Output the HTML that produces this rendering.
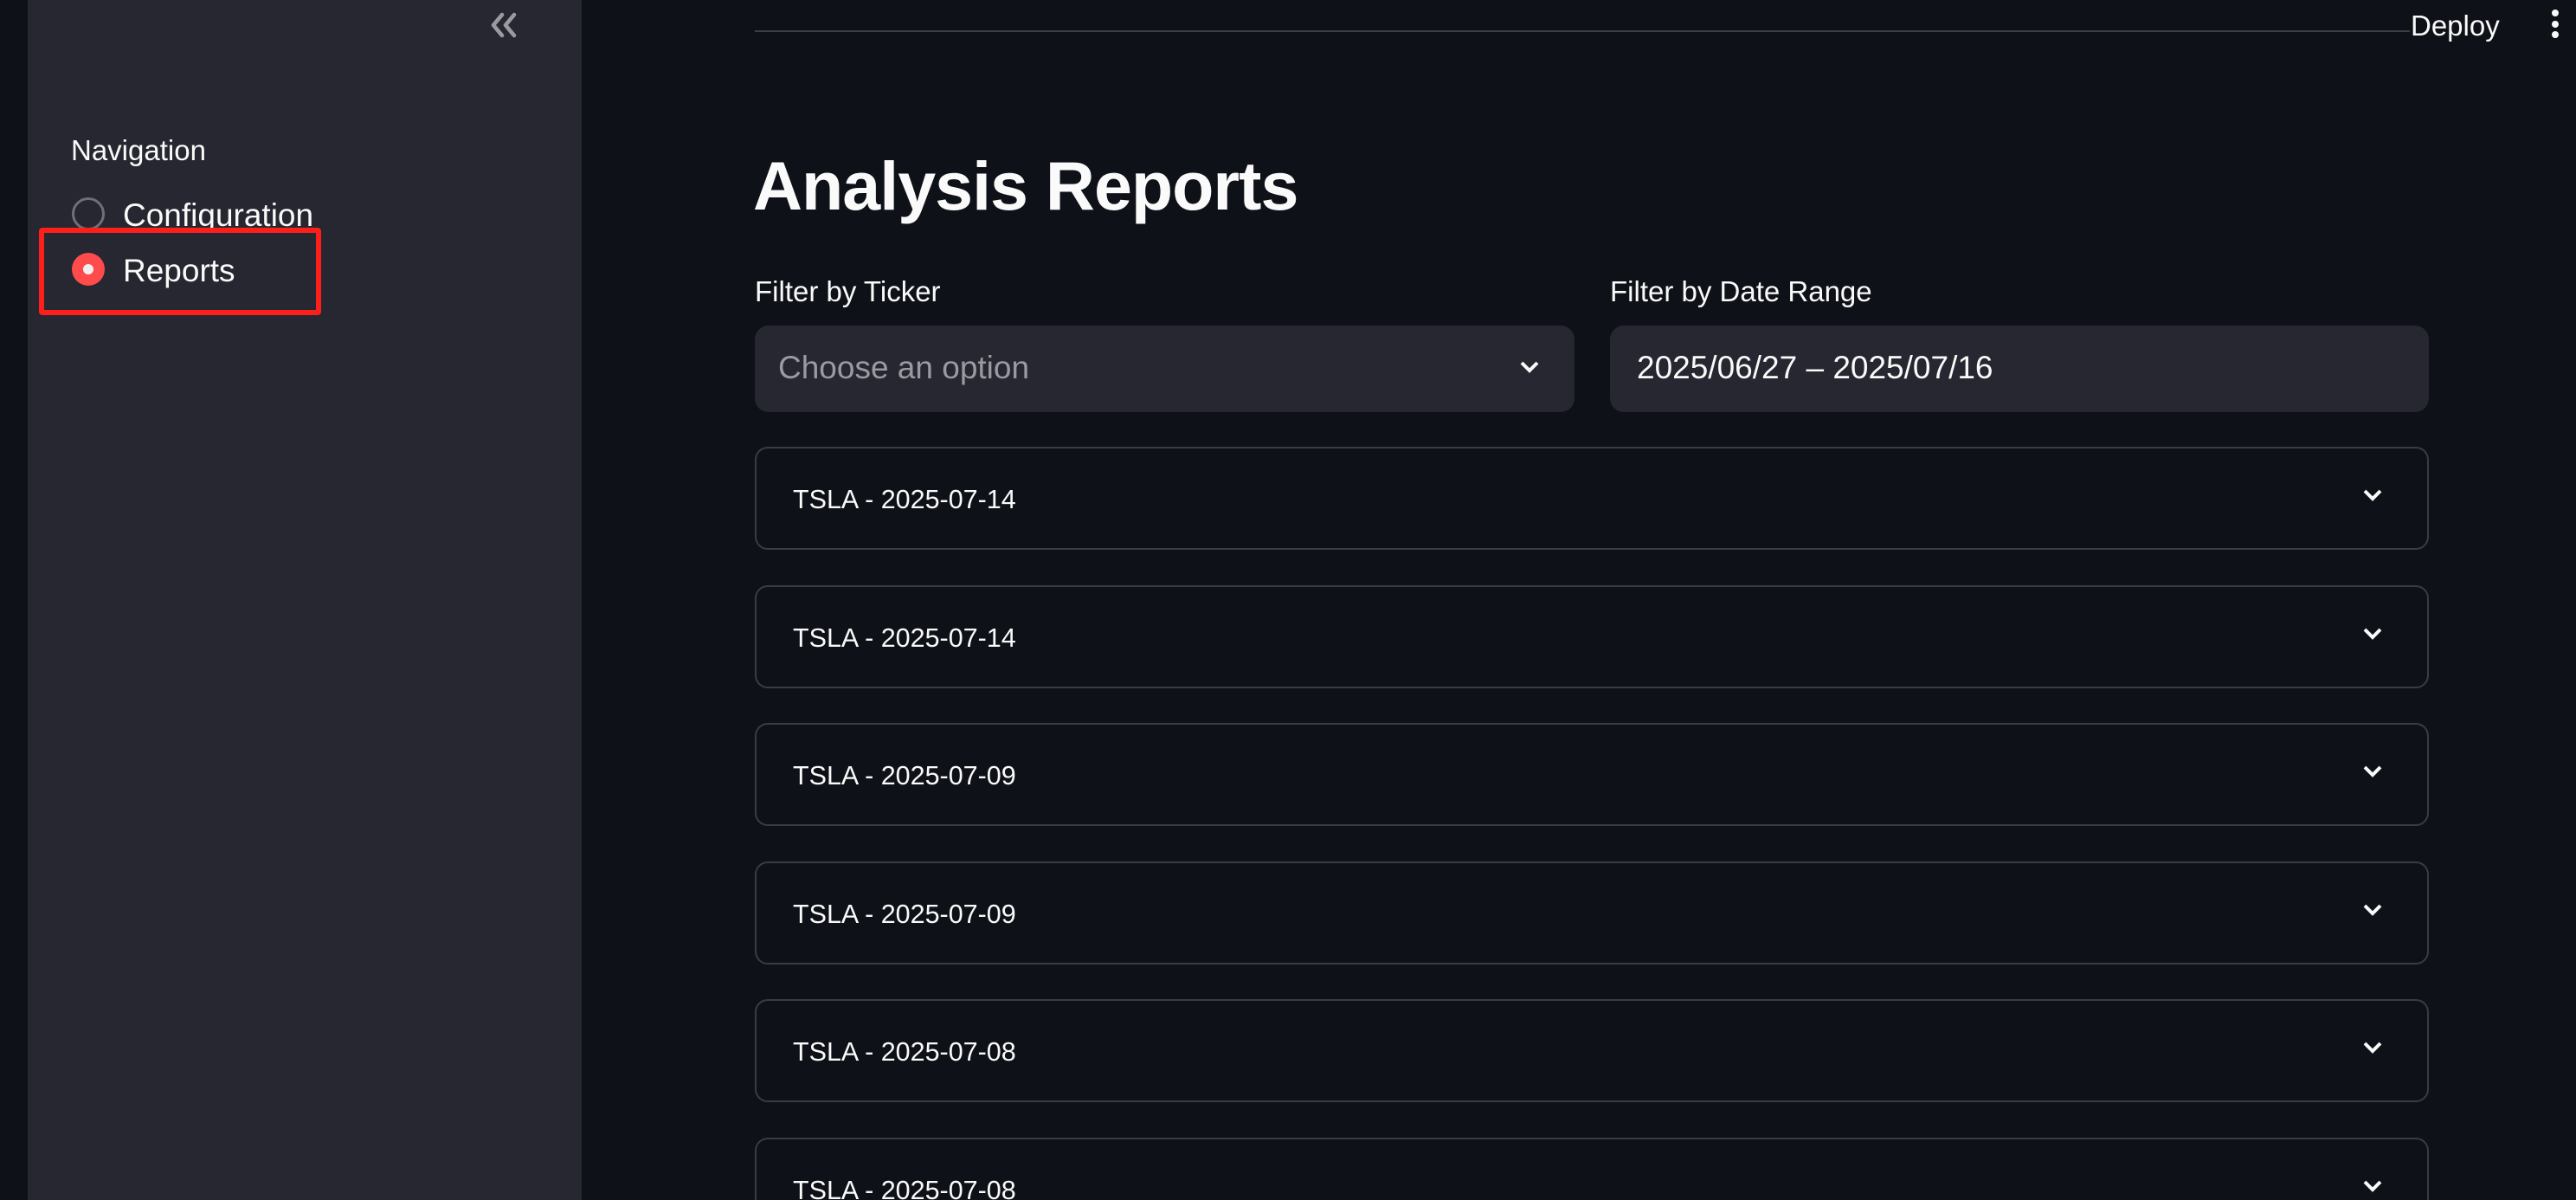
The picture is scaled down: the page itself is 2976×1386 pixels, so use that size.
<!DOCTYPE html>
<html><head><meta charset="utf-8"><style>
*{margin:0;padding:0;box-sizing:border-box}
html,body{width:2976px;height:1386px;overflow:hidden;background:#0e1117;font-family:"Liberation Sans",sans-serif;color:#fafafa}
#w{position:relative;width:2976px;height:1386px;overflow:hidden}
.side{position:absolute;left:32px;top:0;width:640px;height:1386px;background:#262730}
.abs{position:absolute;white-space:nowrap}
.exp{position:absolute;left:872px;width:1934px;height:119px;border:2px solid #3a3c44;border-radius:15px}
.exp span{position:absolute;left:42px;top:42px;font-size:30.5px}
.exp svg{position:absolute;left:1855px;top:46px}
.inp{position:absolute;top:376px;height:100px;background:#262730;border-radius:16px}
</style></head><body><div id="w">
<div class="side"></div>
<svg class="abs" style="left:562px;top:14px" width="40" height="30" viewBox="0 0 40 30"><path d="M18 3 L8 15 L18 27 M32 3 L22 15 L32 27" stroke="#9a9ba0" stroke-width="4.5" fill="none" stroke-linecap="round" stroke-linejoin="round"/></svg>
<div class="abs" style="left:82px;top:155px;font-size:33px">Navigation</div>
<div class="abs" style="left:83px;top:228px;width:38px;height:38px;border:3px solid #6f7077;border-radius:50%"></div>
<div class="abs" style="left:142px;top:228px;font-size:37px">Configuration</div>
<div class="abs" style="left:83px;top:292px;width:38px;height:38px;background:#ff4b4b;border-radius:50%"></div>
<div class="abs" style="left:96px;top:305px;width:12px;height:12px;background:#f0f0f2;border-radius:50%"></div>
<div class="abs" style="left:142px;top:292px;font-size:37px">Reports</div>
<div class="abs" style="left:45px;top:263px;width:326px;height:101px;border:6px solid #ff1f1a;border-radius:4px"></div>

<div class="abs" style="left:872px;top:35px;width:1912px;height:2px;background:#3d3f46"></div>
<div class="abs" style="left:2785px;top:11px;font-size:33px">Deploy</div>
<div class="abs" style="left:2948px;top:11px;width:8px;height:8px;background:#fafafa;border-radius:50%"></div>
<div class="abs" style="left:2948px;top:24px;width:8px;height:8px;background:#fafafa;border-radius:50%"></div>
<div class="abs" style="left:2948px;top:36px;width:8px;height:8px;background:#fafafa;border-radius:50%"></div>

<div class="abs" style="left:870px;top:169px;font-size:79px;font-weight:bold;letter-spacing:-1px">Analysis Reports</div>
<div class="abs" style="left:872px;top:318px;font-size:33px">Filter by Ticker</div>
<div class="abs" style="left:1860px;top:318px;font-size:33px">Filter by Date Range</div>
<div class="inp" style="left:872px;width:947px"></div>
<div class="abs" style="left:899px;top:404px;font-size:37px;color:#9a9ba1">Choose an option</div>
<svg class="abs" style="left:1755px;top:416px" width="24" height="16" viewBox="0 0 24 16"><path d="M3 3 L12 12 L21 3" stroke="#fafafa" stroke-width="4" fill="none"/></svg>
<div class="inp" style="left:1860px;width:946px"></div>
<div class="abs" style="left:1891px;top:404px;font-size:37px">2025/06/27 – 2025/07/16</div>

<div class="exp" style="top:516px"><span>TSLA - 2025-07-14</span><svg width="24" height="16" viewBox="0 0 24 16"><path d="M3 3 L12 12 L21 3" stroke="#fafafa" stroke-width="4" fill="none"/></svg></div>
<div class="exp" style="top:676px"><span>TSLA - 2025-07-14</span><svg width="24" height="16" viewBox="0 0 24 16"><path d="M3 3 L12 12 L21 3" stroke="#fafafa" stroke-width="4" fill="none"/></svg></div>
<div class="exp" style="top:835px"><span>TSLA - 2025-07-09</span><svg width="24" height="16" viewBox="0 0 24 16"><path d="M3 3 L12 12 L21 3" stroke="#fafafa" stroke-width="4" fill="none"/></svg></div>
<div class="exp" style="top:995px"><span>TSLA - 2025-07-09</span><svg width="24" height="16" viewBox="0 0 24 16"><path d="M3 3 L12 12 L21 3" stroke="#fafafa" stroke-width="4" fill="none"/></svg></div>
<div class="exp" style="top:1154px"><span>TSLA - 2025-07-08</span><svg width="24" height="16" viewBox="0 0 24 16"><path d="M3 3 L12 12 L21 3" stroke="#fafafa" stroke-width="4" fill="none"/></svg></div>
<div class="exp" style="top:1314px"><span>TSLA - 2025-07-08</span><svg width="24" height="16" viewBox="0 0 24 16"><path d="M3 3 L12 12 L21 3" stroke="#fafafa" stroke-width="4" fill="none"/></svg></div>
</div></body></html>
